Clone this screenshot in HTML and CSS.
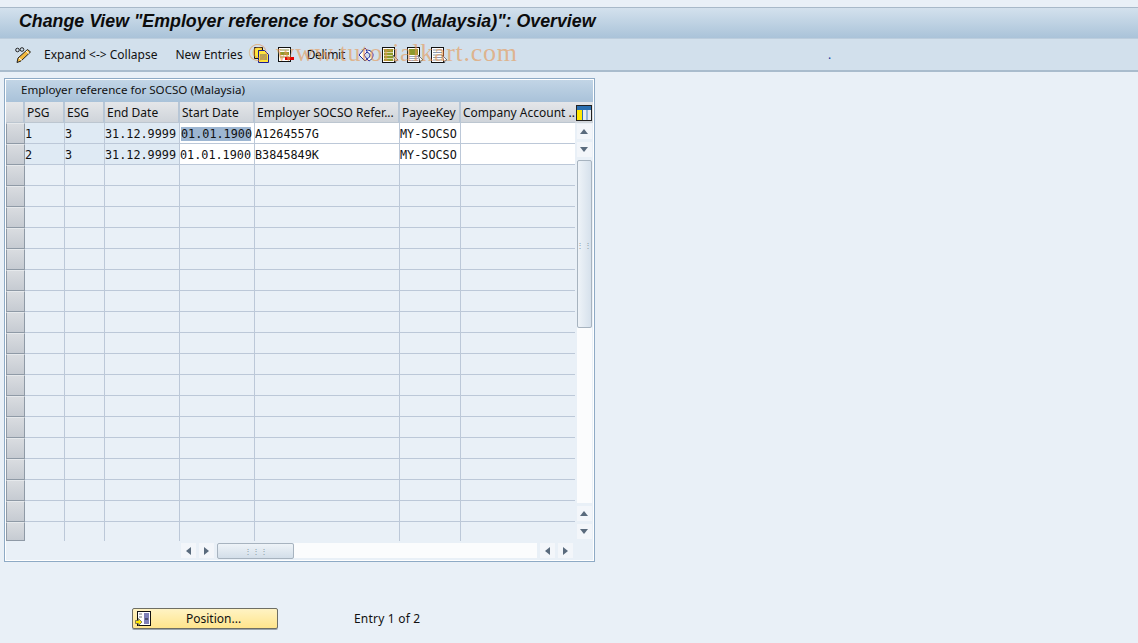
FILE: index.html
```html
<!DOCTYPE html>
<html lang="en">
<head>
    <meta charset="UTF-8">
    <title>Employer reference for SOCSO (Malaysia)</title>
    <link rel="stylesheet" href="styles.css">
</head>
<body>

<header class="title-bar">
    <h1>Change View "Employer reference for SOCSO (Malaysia)": Overview</h1>
</header>

<div class="toolbar">
    <svg class="icon first-icon" viewBox="0 0 16 16">
        <circle cx="2.500" cy="3" r="1.800" fill="none" stroke="#222" stroke-width="1"/>
        <circle cx="7" cy="2.500" r="1.800" fill="none" stroke="#222" stroke-width="1"/>
        <path d="M12.500 2.500l3 2.500-9.500 9-4 1.500 1-4.500z" fill="#f2b93f" stroke="#222" stroke-width="1"/>
        <path d="M4 11l3 2.500M11 4l3 2.500" stroke="#fff" stroke-width="1"/>
    </svg>
    <span class="tool-text expand">Expand &lt;-&gt; Collapse</span>
    <span class="tool-text new-entries">New Entries</span>
    <svg class="icon copy-icon" viewBox="0 0 16 16">
        <path d="M.5 .5h8v3h-4v8h-4z" fill="#ffe23c" stroke="#111"/>
        <path d="M4.500 3.500h6l4 4v8h-10z" fill="#ffe23c" stroke="#1a1a90"/>
        <path d="M6 8h7M6 10h7M6 12h7" stroke="#666"/>
    </svg>
    <svg class="icon delete-icon" viewBox="0 0 16 16">
        <rect x=".5" y=".5" width="12" height="14" fill="#fff" stroke="#111"/>
        <rect x="2" y="2" width="9" height="2" fill="#c5c8a0"/>
        <rect x="2" y="5" width="9" height="3" fill="#8d9a2c"/>
        <rect x="2" y="9" width="9" height="2" fill="#c5c8a0"/>
        <rect x="7" y="10" width="9" height="3" fill="#e30000"/>
    </svg>
    <span class="tool-text delimit">Delimit</span>
    <svg class="icon undo-icon" viewBox="0 0 16 16">
        <path d="M1 8l6-7 3 3-4 4 3 4-2 2z" fill="#fff" stroke="#1a2a9c"/>
        <path d="M8 3c4 0 7 2 7 5 0 3-2 5-4 6l-2-2c2-1 3-2.500 3-4 0-1.500-1.500-2-2-2z" fill="#fff" stroke="#1a2a9c"/>
    </svg>
    <svg class="icon select-icon" viewBox="0 0 16 16">
        <rect x=".5" y=".5" width="12" height="15" fill="#fff" stroke="#111"/>
        <rect x="2" y="2" width="9" height="12" fill="#8d9a2c"/>
        <path d="M2 5.500h9M2 8.500h9M2 11.500h9" stroke="#d8d8a8"/>
        <path d="M11 8l5 5-2 .5-.5 2.500z" fill="#fff" stroke="#333" stroke-width=".6"/>
    </svg>
    <svg class="icon block-icon" viewBox="0 0 16 16">
        <rect x=".5" y=".5" width="12" height="15" fill="#fff" stroke="#111"/>
        <rect x="2" y="2" width="9" height="6" fill="#8d9a2c"/>
        <path d="M2 9.500h9M2 11.500h9M2 13.500h9" stroke="#9aa7c0"/>
        <path d="M11 8l5 5-2 .5-.5 2.500z" fill="#fff" stroke="#333" stroke-width=".6"/>
    </svg>
    <svg class="icon deselect-icon" viewBox="0 0 16 16">
        <rect x=".5" y=".5" width="12" height="15" fill="#fff" stroke="#111"/>
        <path d="M2 3h9M2 5.500h9M2 8h9M2 10.500h9M2 13h9" stroke="#8d9ab4" stroke-width="1.200"/>
        <path d="M11 8l5 5-2 .5-.5 2.500z" fill="#fff" stroke="#333" stroke-width=".6"/>
    </svg>
    <span class="status-dot">.</span>
    <div class="watermark">©&nbsp;www.tutorialkart.com</div>
</div>

<main class="content">
    <section class="panel">
        <div class="panel-title">Employer reference for SOCSO (Malaysia)</div>
        <div class="grid-wrap">
            <table class="grid">
                <colgroup>
                    <col class="c-sel"><col class="c-psg"><col class="c-esg"><col class="c-date"><col class="c-date">
                    <col class="c-ref"><col class="c-key"><col class="c-acc">
                </colgroup>
                <thead>
                    <tr><th></th><th>PSG</th><th>ESG</th><th>End Date</th><th>Start Date</th><th>Employer SOCSO Refer...</th><th>PayeeKey</th><th>Company Account ..</th></tr>
                </thead>
                <tbody>
                    <tr class="filled"><td class="sel"></td><td class="key">1</td><td class="key">3</td><td class="key">31.12.9999</td><td class="edit"><span class="picked">01.01.1900</span></td><td class="edit">A1264557G</td><td class="edit">MY-SOCSO</td><td class="edit"></td></tr>
                    <tr class="filled"><td class="sel"></td><td class="key">2</td><td class="key">3</td><td class="key">31.12.9999</td><td class="edit">01.01.1900</td><td class="edit">B3845849K</td><td class="edit">MY-SOCSO</td><td class="edit"></td></tr>
                    <tr><td class="sel"></td><td></td><td></td><td></td><td></td><td></td><td></td><td></td></tr>
                    <tr><td class="sel"></td><td></td><td></td><td></td><td></td><td></td><td></td><td></td></tr>
                    <tr><td class="sel"></td><td></td><td></td><td></td><td></td><td></td><td></td><td></td></tr>
                    <tr><td class="sel"></td><td></td><td></td><td></td><td></td><td></td><td></td><td></td></tr>
                    <tr><td class="sel"></td><td></td><td></td><td></td><td></td><td></td><td></td><td></td></tr>
                    <tr><td class="sel"></td><td></td><td></td><td></td><td></td><td></td><td></td><td></td></tr>
                    <tr><td class="sel"></td><td></td><td></td><td></td><td></td><td></td><td></td><td></td></tr>
                    <tr><td class="sel"></td><td></td><td></td><td></td><td></td><td></td><td></td><td></td></tr>
                    <tr><td class="sel"></td><td></td><td></td><td></td><td></td><td></td><td></td><td></td></tr>
                    <tr><td class="sel"></td><td></td><td></td><td></td><td></td><td></td><td></td><td></td></tr>
                    <tr><td class="sel"></td><td></td><td></td><td></td><td></td><td></td><td></td><td></td></tr>
                    <tr><td class="sel"></td><td></td><td></td><td></td><td></td><td></td><td></td><td></td></tr>
                    <tr><td class="sel"></td><td></td><td></td><td></td><td></td><td></td><td></td><td></td></tr>
                    <tr><td class="sel"></td><td></td><td></td><td></td><td></td><td></td><td></td><td></td></tr>
                    <tr><td class="sel"></td><td></td><td></td><td></td><td></td><td></td><td></td><td></td></tr>
                    <tr><td class="sel"></td><td></td><td></td><td></td><td></td><td></td><td></td><td></td></tr>
                    <tr><td class="sel"></td><td></td><td></td><td></td><td></td><td></td><td></td><td></td></tr>
                    <tr class="last"><td class="sel"></td><td></td><td></td><td></td><td></td><td></td><td></td><td></td></tr>
                </tbody>
            </table>
            <div class="vscroll">
                <div class="config-cell">
                    <svg class="config" viewBox="0 0 16 16">
                        <rect x=".5" y=".5" width="15" height="15" fill="#fff" stroke="#222"/>
                        <rect x="1" y="1" width="14" height="4" fill="#2a6fb0"/>
                        <rect x="1" y="5" width="5" height="10" fill="#ffe800"/>
                        <rect x="7" y="5" width="3" height="10" fill="#e6ebf1"/>
                        <rect x="12" y="5" width="3" height="10" fill="#e6ebf1"/>
                        <path d="M6.500 1v14M11 1v14" stroke="#2a6fb0"/>
                    </svg>
                </div>
                <div class="arrow-btn up"><i></i></div>
                <div class="arrow-btn down"><i></i></div>
                <div class="thumb-v"><span>⋮⋮</span></div>
                <div class="track-v"></div>
                <div class="arrow-btn up"><i></i></div>
                <div class="arrow-btn down"><i></i></div>
            </div>
        </div>
        <div class="hscroll">
            <div class="arrow-btn left"><i></i></div>
            <div class="arrow-btn right"><i></i></div>
            <div class="thumb-h"><span>⋮⋮⋮</span></div>
            <div class="track-h"></div>
            <div class="arrow-btn left"><i></i></div>
            <div class="arrow-btn right"><i></i></div>
        </div>
    </section>

    <div class="bottom-row">
        <button class="position-btn">
            <svg class="icon" viewBox="0 0 16 16">
                <rect x="2.500" y=".5" width="13" height="14" fill="#fff" stroke="#111"/>
                <rect x="9" y="2" width="5" height="11" fill="#7f80b8"/>
                <path d="M4 3h3M4 6h3" stroke="#777"/>
                <path d="M10 8h3" stroke="#222"/>
                <path d="M.5 9.500h3v-2l3.500 3.500-3.500 3.500v-2h-3z" fill="#ffe800" stroke="#555" stroke-width=".7"/>
            </svg>
            <span>Position...</span>
        </button>
        <span class="entry-info">Entry 1 of 2</span>
    </div>
</main>

</body>
</html>
```

FILE: styles.css
```css
* {
    margin: 0;
    padding: 0;
    box-sizing: border-box;
}

body {
    width: 1138px;
    height: 643px;
    overflow: hidden;
    background: #e9f0f7;
    font-family: 'Noto Sans', 'Liberation Sans', sans-serif;
    font-size: 12px;
    color: #111;
    padding-top: 7px;
}

.title-bar {
    height: 31px;
    padding: 0 0 3px 19px;
    display: flex;
    align-items: center;
    border-top: 1px solid #a8b9c9;
    background: linear-gradient(#d3e1ed, #aac3d9);
}

.title-bar h1 {
    font-family: 'Liberation Sans', sans-serif;
    font-size: 17.8px;
    font-style: italic;
    font-weight: bold;
    color: #0c0c0c;
    white-space: nowrap;
}

.toolbar {
    position: relative;
    height: 34px;
    display: flex;
    align-items: center;
    background: #d2e0ec;
    border-top: 1px solid #bccddd;
    border-bottom: 2px solid #a9bccd;
    padding-left: 15px;
}

.icon {
    width: 16px;
    height: 16px;
    flex: none;
}

.tool-text {
    white-space: nowrap;
}

.expand { margin-left: 13px; }
.new-entries { margin-left: 18px; }
.copy-icon { margin-left: 11px; }
.delete-icon { margin-left: 8px; }
.delimit { margin-left: 13px; letter-spacing: -.3px; }
.undo-icon { margin-left: 13px; }
.select-icon { margin-left: 8px; }
.block-icon { margin-left: 9px; }
.deselect-icon { margin-left: 8px; }

.status-dot {
    margin-left: 381px;
    color: #1a3fa0;
}

.watermark {
    position: absolute;
    left: 248px;
    top: -1px;
    font-family: 'Liberation Serif', serif;
    font-size: 26px;
    letter-spacing: .7px;
    color: rgba(230, 150, 80, .62);
    white-space: nowrap;
    pointer-events: none;
}

.content {
    padding: 6px 0 0 4px;
}

.panel {
    width: 591px;
    height: 484px;
    border: 1px solid #8eaac5;
    padding: 1px;
    box-shadow: inset 0 0 0 1px #fff;
}

.panel-title {
    height: 22px;
    line-height: 20px;
    padding-left: 15px;
    font-size: 11.6px;
    background: linear-gradient(#c2d5e6, #a9c2d9);
    white-space: nowrap;
}

.grid-wrap {
    display: flex;
    height: 439px;
}

.grid {
    width: 569px;
    table-layout: fixed;
    border-collapse: separate;
    border-spacing: 0;
    flex: none;
    height: 439px;
}

.c-sel { width: 19px; }
.c-psg { width: 40px; }
.c-esg { width: 40px; }
.c-date { width: 75px; }
.c-ref { width: 145px; }
.c-key { width: 61px; }
.c-acc { width: 114px; }

.grid th {
    height: 21px;
    padding: 0 2px;
    font-weight: normal;
    text-align: left;
    white-space: nowrap;
    overflow: hidden;
    background: linear-gradient(#e4e6e9, #cfd4da);
    border-right: 2px solid #b7c6d6;
    border-bottom: 1px solid #bcc6d0;
}

.grid th:last-child {
    border-right: none;
}

.grid td {
    height: 21px;
    padding: 1px 0 0;
    font-family: 'DejaVu Sans Mono', 'Liberation Mono', monospace;
    font-size: 11.8px;
    line-height: 14px;
    white-space: nowrap;
    overflow: hidden;
    border-right: 1px solid #bcc8d8;
    border-bottom: 1px solid #bcc8d8;
}

.grid td:last-child {
    border-right: none;
}

.grid td.sel {
    padding: 0;
    background: linear-gradient(#d9dce0, #c6cbd2);
    border: 1px solid #8f9aa6;
    border-top-color: #e6e9ec;
}

.grid td.key {
    background: #dfeaf4;
}

.grid td.edit {
    background: #fff;
}

.picked {
    display: block;
    margin: 0 3px 0 1px;
    background: #9db6d2;
}

.grid tr.last td {
    height: 19px;
    border-bottom: none;
}

.grid tr.last td.sel {
    border-bottom: 1px solid #8f9aa6;
}

.vscroll {
    width: 18px;
    flex: none;
    display: flex;
    flex-direction: column;
    align-items: center;
}

.config-cell {
    width: 18px;
    height: 21px;
    flex: none;
    display: flex;
    align-items: center;
    justify-content: center;
    margin-bottom: 1px;
    background: linear-gradient(#e4e6e9, #cfd4da);
}

.config {
    width: 16px;
    height: 16px;
}

.arrow-btn {
    width: 15px;
    height: 15px;
    flex: none;
    display: flex;
    align-items: center;
    justify-content: center;
    background: #f3f6fa;
}

.vscroll .arrow-btn {
    margin-bottom: 3px;
}

.vscroll .arrow-btn:last-child {
    margin-bottom: 2px;
}

.arrow-btn i {
    width: 0;
    height: 0;
    border: 4px solid transparent;
}

.arrow-btn.up i {
    border-top: none;
    border-bottom: 5px solid #5a6b7d;
}

.arrow-btn.down i {
    border-bottom: none;
    border-top: 5px solid #5a6b7d;
}

.arrow-btn.left i {
    border-left: none;
    border-right: 5px solid #5a6b7d;
}

.arrow-btn.right i {
    border-right: none;
    border-left: 5px solid #5a6b7d;
}

.thumb-v {
    width: 15px;
    height: 168px;
    flex: none;
    display: flex;
    align-items: center;
    justify-content: center;
    background: linear-gradient(90deg, #eef3f8, #d6e1ec);
    border: 1px solid #a7b3bf;
    border-radius: 2px;
    font-size: 8px;
    color: #8b98a5;
}

.track-v {
    width: 15px;
    flex: 1;
    background: #fbfcfd;
    margin-bottom: 3px;
}

.hscroll {
    height: 19px;
    display: flex;
    align-items: center;
    padding-left: 175px;
    gap: 3px;
}

.hscroll .arrow-btn {
    height: 15px;
    width: 15px;
}

.thumb-h {
    width: 77px;
    height: 16px;
    flex: none;
    display: flex;
    align-items: center;
    justify-content: center;
    background: linear-gradient(#eef3f8, #d3dee9);
    border: 1px solid #a7b3bf;
    border-radius: 2px;
    font-size: 8px;
    color: #8b98a5;
}

.track-h {
    width: 243px;
    height: 15px;
    flex: none;
    margin-left: -3px;
    background: #fbfcfd;
}

.bottom-row {
    display: flex;
    align-items: center;
    padding: 46px 0 0 128px;
}

.position-btn {
    width: 146px;
    height: 21px;
    display: flex;
    align-items: center;
    padding-left: 2px;
    font: inherit;
    color: #111;
    background: linear-gradient(#fff3c4, #ffe58c);
    border: 1px solid #6e6e64;
    border-radius: 2px;
    box-shadow: 0 1px 0 #9aa4ad;
}

.position-btn span {
    margin-left: 35px;
}

.entry-info {
    margin-left: 76px;
    letter-spacing: .2px;
}
```
